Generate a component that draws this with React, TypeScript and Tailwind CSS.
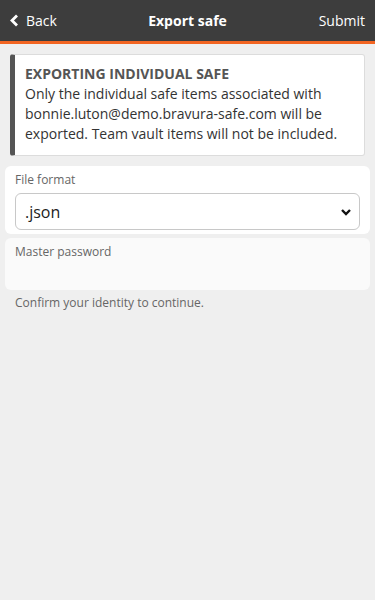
export default function App() {
  return (
    <div
      className="w-[375px] h-[600px] bg-[#efefef] flex flex-col"
      style={{ fontFamily: '"Open Sans", "Liberation Sans", sans-serif' }}
    >
      {/* Header */}
      <div className="relative h-[41px] bg-[#3d3d3d] border-b-[3px] border-[#f26522] box-content flex items-center justify-between px-[10px] text-white text-[14px]">
        <button className="flex items-center gap-[7px]">
          <svg width="9" height="13" viewBox="0 0 9 13">
            <path d="M7 1.5L2 6.5l5 5" fill="none" stroke="#fff" strokeWidth="2.8" />
          </svg>
          <span>Back</span>
        </button>
        <div className="font-bold absolute left-1/2 -translate-x-1/2">Export safe</div>
        <button>Submit</button>
      </div>

      <div className="flex flex-col px-[5px] pt-[10px]">
        {/* Alert */}
        <div className="mx-[5px] bg-white border border-[#dcdcdc] border-l-[5px] border-l-[#555555] rounded-[3px] pl-[10px] pr-2 pt-[9px] pb-[11px] text-[14px] leading-[20px] text-[#333]">
          <div className="font-bold text-[#555]">EXPORTING INDIVIDUAL SAFE</div>
          <p>
            Only the individual safe items associated with
            bonnie.luton@demo.bravura-safe.com will be exported. Team vault
            items will not be included.
          </p>
        </div>

        {/* File format */}
        <div className="mt-[10px] bg-white rounded-[6px] px-[10px] pt-[6px] pb-[4px]">
          <label className="block text-[12px] leading-[16px] text-[#666]">File format</label>
          <div className="mt-[5px] h-[37px] border border-[#c8c8c8] rounded-[6px] flex items-center justify-between pl-[9px] pr-[7px] text-[16px] text-[#222]">
            <span>.json</span>
            <svg width="12" height="8" viewBox="0 0 12 8">
              <path d="M2 2l4 4 4-4" fill="none" stroke="#111" strokeWidth="2.4" />
            </svg>
          </div>
        </div>

        {/* Master password */}
        <div className="mt-[4px] bg-[#fafafa] rounded-[6px] px-[10px] pt-[6px] h-[52px]">
          <label className="block text-[12px] leading-[16px] text-[#666]">Master password</label>
        </div>

        <p className="px-[10px] mt-[5px] text-[12px] leading-[16px] text-[#666]">
          Confirm your identity to continue.
        </p>
      </div>
    </div>
  );
}
